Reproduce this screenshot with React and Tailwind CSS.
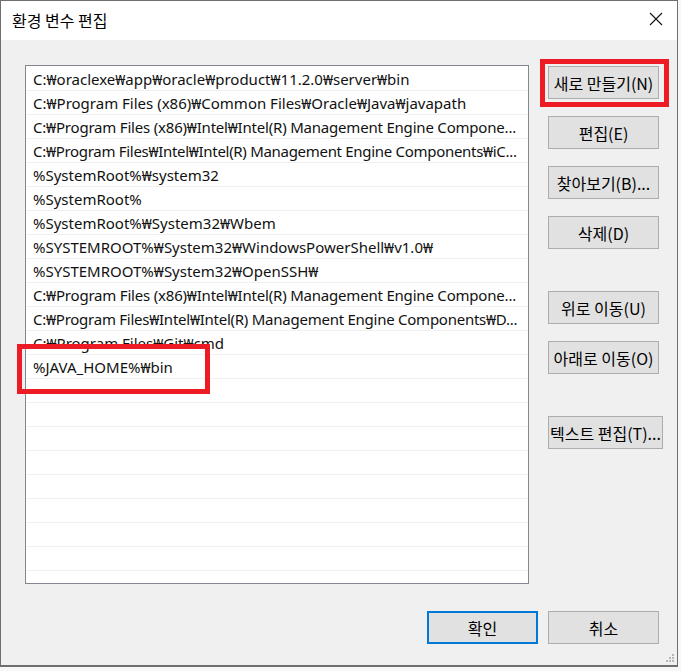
import React from 'react';

const paths = [
  { t: 'C:₩oraclexe₩app₩oracle₩product₩11.2.0₩server₩bin' },
  { t: 'C:₩Program Files (x86)₩Common Files₩Oracle₩Java₩javapath' },
  { t: 'C:₩Program Files (x86)₩Intel₩Intel(R) Management Engine Compone...', tight: 'tracking-[-0.2px]' },
  { t: 'C:₩Program Files₩Intel₩Intel(R) Management Engine Components₩iC...', tight: 'tracking-[-0.3px]' },
  { t: '%SystemRoot%₩system32' },
  { t: '%SystemRoot%' },
  { t: '%SystemRoot%₩System32₩Wbem' },
  { t: '%SYSTEMROOT%₩System32₩WindowsPowerShell₩v1.0₩' },
  { t: '%SYSTEMROOT%₩System32₩OpenSSH₩' },
  { t: 'C:₩Program Files (x86)₩Intel₩Intel(R) Management Engine Compone...', tight: 'tracking-[-0.2px]' },
  { t: 'C:₩Program Files₩Intel₩Intel(R) Management Engine Components₩D...', tight: 'tracking-[-0.25px]' },
  { t: 'C:₩Program Files₩Git₩cmd' },
  { t: '%JAVA_HOME%₩bin' },
];

const rows = [...paths, ...Array(9).fill({ t: '' })];

const Btn = ({ children, className = '', border = 'border border-[#adadad]' }) => (
  <button
    className={`h-[33px] w-[111px] shrink-0 bg-[#e1e1e1] ${border} text-[16px] text-black leading-none whitespace-nowrap px-0 ${className}`}
  >
    {children}
  </button>
);

const App = () => {
  return (
    <div className="w-[681px] h-[671px] bg-[#f7f7f7] font-['Noto_Sans','Noto_Sans_CJK_KR',sans-serif]">
      <div className="relative w-[678px] h-[667px] bg-[#f0f0f0] border border-[#6f6f6f] border-b-2 flex flex-col">
        {/* Title bar */}
        <div className="h-[39px] bg-white flex items-center justify-between pl-[11px] pr-[14px]">
          <span className="text-[16px] text-black font-['Noto_Sans_CJK_KR',sans-serif] -mt-[2px]">환경 변수 편집</span>
          <svg width="14" height="14" viewBox="0 0 14 14" className="-mt-[3px]">
            <path d="M1 1 L13 13 M13 1 L1 13" stroke="#111" strokeWidth="1.1" />
          </svg>
        </div>

        {/* Client area */}
        <div className="flex-1 flex flex-col pl-[24px] pr-[12px] pt-[25px]">
          <div className="flex gap-[19px]">
            {/* List */}
            <div className="w-[504px] h-[519px] shrink-0 bg-white border border-[#828790] overflow-hidden pt-[1px]">
              {rows.map((row, i) => (
                <div
                  key={i}
                  className={`h-[24px] border-b border-[#f0f0f0] pl-[7px] pt-[2px] flex items-center text-[15px] text-[#111] whitespace-nowrap ${row.tight || ''}`}
                >
                  {row.t}
                </div>
              ))}
            </div>

            {/* Right buttons */}
            <div className="flex flex-col pt-[1px] font-['Noto_Sans_CJK_KR',sans-serif]">
              <Btn>새로 만들기(N)</Btn>
              <Btn className="mt-[17px]">편집(E)</Btn>
              <Btn className="mt-[17px]">찾아보기(B)...</Btn>
              <Btn className="mt-[17px]">삭제(D)</Btn>
              <Btn className="mt-[42px]">위로 이동(U)</Btn>
              <Btn className="mt-[17px]">아래로 이동(O)</Btn>
              <Btn className="mt-[42px] w-[115px]">텍스트 편집(T)...</Btn>
            </div>
          </div>

          {/* Bottom buttons */}
          <div className="flex justify-end gap-[10px] mt-[27px] mr-[6px] font-['Noto_Sans_CJK_KR',sans-serif]">
            <Btn border="border-2 border-[#0078d7]">확인</Btn>
            <Btn>취소</Btn>
          </div>
        </div>

        {/* Resize grip */}
        <div className="absolute right-[3px] bottom-[3px] grid grid-cols-3 gap-[1px]">
          <span className="w-[2px] h-[2px]" />
          <span className="w-[2px] h-[2px]" />
          <span className="w-[2px] h-[2px] bg-[#b8b8b8]" />
          <span className="w-[2px] h-[2px]" />
          <span className="w-[2px] h-[2px] bg-[#b8b8b8]" />
          <span className="w-[2px] h-[2px] bg-[#b8b8b8]" />
          <span className="w-[2px] h-[2px] bg-[#b8b8b8]" />
          <span className="w-[2px] h-[2px] bg-[#b8b8b8]" />
          <span className="w-[2px] h-[2px] bg-[#b8b8b8]" />
        </div>

        {/* Red annotation boxes */}
        <div className="absolute left-[539px] top-[58px] w-[129px] h-[48px] border-[5px] border-[#ed1c24]" />
        <div className="absolute left-[16px] top-[343px] w-[193px] h-[50px] border-[5px] border-[#ed1c24]" />
      </div>
    </div>
  );
};

export default App;
